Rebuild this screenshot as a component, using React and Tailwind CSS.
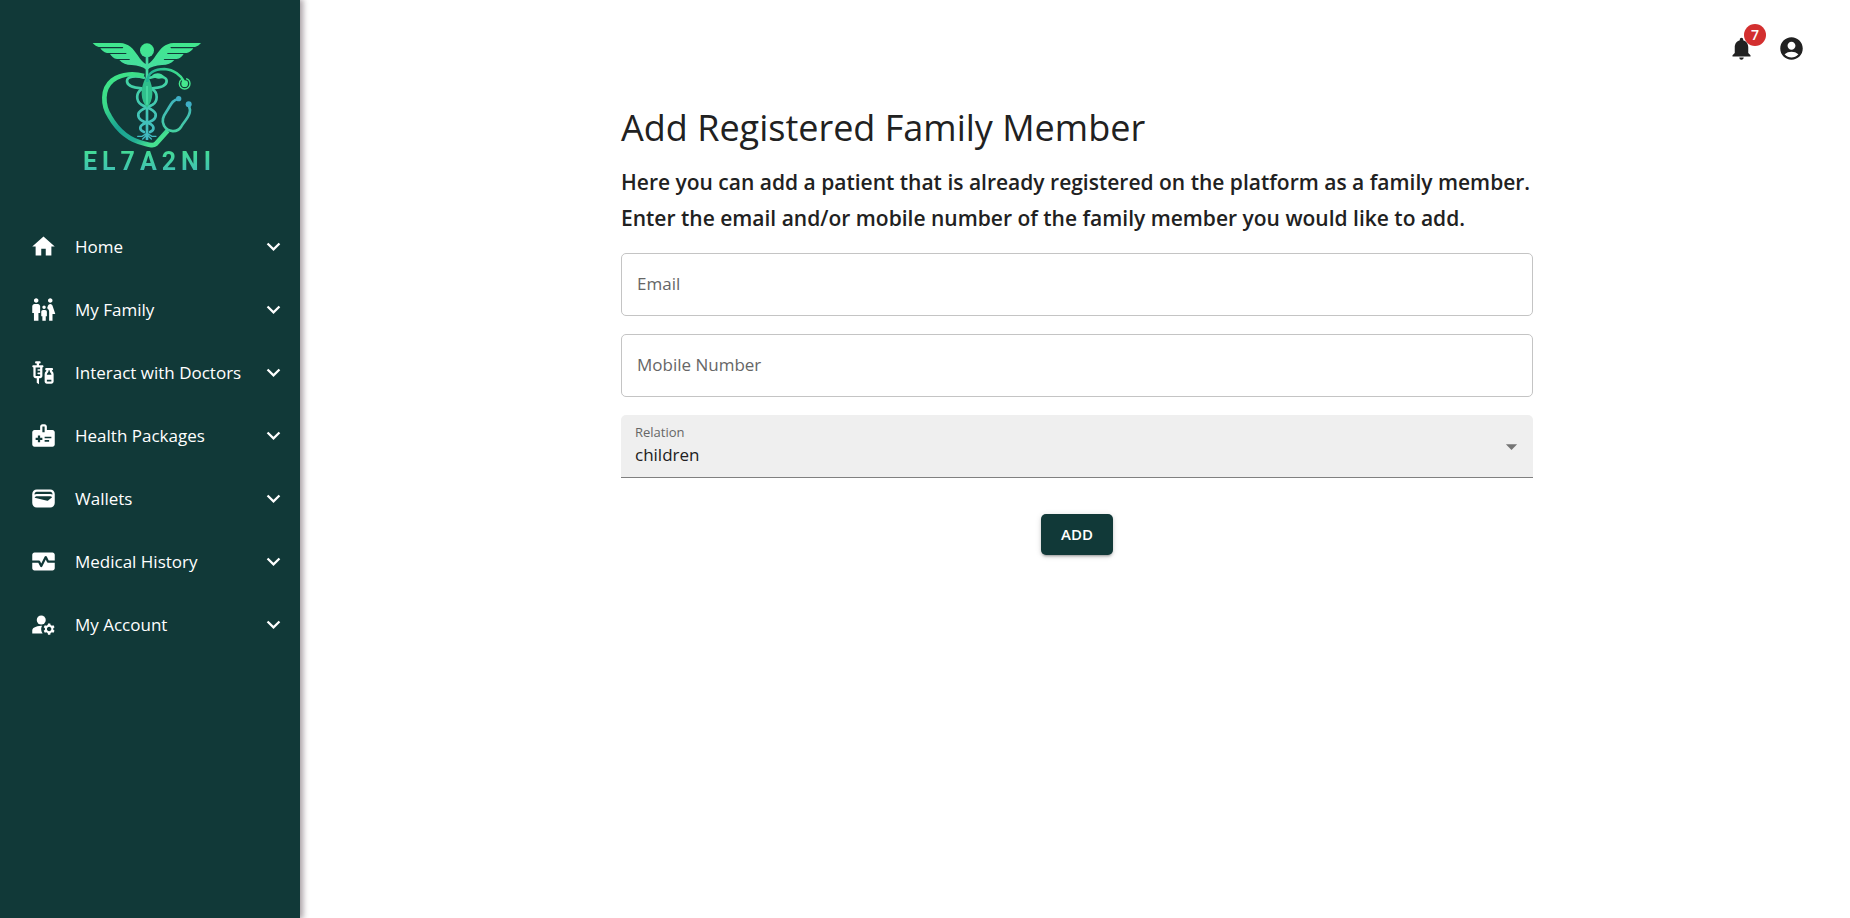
import {
  MdAccountCircle,
  MdArrowDropDown,
  MdExpandMore,
  MdFamilyRestroom,
  MdHome,
  MdManageAccounts,
  MdMedicalInformation,
  MdMonitorHeart,
  MdNotifications,
  MdVaccines,
  MdWallet,
} from "react-icons/md";

const menu = [
  { label: "Home", Icon: MdHome },
  { label: "My Family", Icon: MdFamilyRestroom },
  { label: "Interact with Doctors", Icon: MdVaccines },
  { label: "Health Packages", Icon: MdMedicalInformation },
  { label: "Wallets", Icon: MdWallet },
  { label: "Medical History", Icon: MdMonitorHeart },
  { label: "My Account", Icon: MdManageAccounts },
];

function Logo() {
  return (
    <div className="flex flex-col items-center">
      <svg viewBox="60 30 345 330" className="h-[110px] w-[115px]" fill="none" aria-hidden="true">
        <defs>
          <linearGradient id="wing" x1="0" y1="35" x2="0" y2="120" gradientUnits="userSpaceOnUse">
            <stop offset="0" stopColor="#40e88c" />
            <stop offset="1" stopColor="#46dca0" />
          </linearGradient>
          <linearGradient id="snake" x1="0" y1="130" x2="0" y2="330" gradientUnits="userSpaceOnUse">
            <stop offset="0" stopColor="#43d7a0" />
            <stop offset="1" stopColor="#42b9c4" />
          </linearGradient>
          <linearGradient id="heart" x1="110" y1="140" x2="245" y2="340" gradientUnits="userSpaceOnUse">
            <stop offset="0" stopColor="#3fe587" />
            <stop offset="0.3" stopColor="#3ad98a" />
            <stop offset="0.6" stopColor="#1aa593" />
            <stop offset="0.85" stopColor="#22ad94" />
            <stop offset="1" stopColor="#45e090" />
          </linearGradient>
          <linearGradient id="tube" x1="230" y1="0" x2="345" y2="0" gradientUnits="userSpaceOnUse">
            <stop offset="0" stopColor="#1faf93" />
            <stop offset="1" stopColor="#43e58e" />
          </linearGradient>
          <linearGradient id="fork" x1="0" y1="200" x2="0" y2="345" gradientUnits="userSpaceOnUse">
            <stop offset="0" stopColor="#3fb3bf" />
            <stop offset="0.6" stopColor="#44c8a8" />
            <stop offset="1" stopColor="#45e48e" />
          </linearGradient>
        </defs>
        <g fill="url(#wing)">
          <circle cx="231" cy="61" r="21" />
          <path d="M68 39H150C176 40 190 56 203 76C212 90 220 99 229 103V119C219 111 204 106 185 105C169 105 157 100 148 90H178L180 87H141C131 86 125 80 120 72H168L170 69H111C101 67 95 61 91 55H158L160 51H86C78 49 73 45 68 39Z" />
          <path d="M393 39H311C285 40 271 56 258 76C249 90 241 99 232 103V119C242 111 257 106 276 105C292 105 304 100 313 90H283L281 87H320C330 86 336 80 341 72H293L291 69H350C360 67 366 61 370 55H303L301 51H375C383 49 388 45 393 39Z" />
          <path d="M227 78H235V330H227Z" fill="url(#snake)" />
        </g>
        <g stroke="url(#snake)" strokeWidth="8" strokeLinecap="round">
          <path d="M222 143C196 136 171 139 171 153C171 169 198 174 215 175" />
          <path d="M240 143C264 136 290 139 290 153C290 169 264 174 246 175" />
          <path d="M214 178C198 188 197 213 214 224C228 233 253 236 257 252C260 270 240 276 226 280C207 287 206 300 222 306" />
          <path d="M248 178C264 188 264 213 248 224C234 233 208 236 205 252C202 270 221 276 236 280C255 287 254 300 240 306" />
          <path d="M203 319H216L231 310L246 319H258M218 327L231 314L244 327" strokeWidth="4" />
        </g>
        <path d="M246 136C258 126 276 128 284 142C270 149 255 148 246 136Z" fill="#44dca0" />
        <path d="M222 138C196 131 157 129 127 151C95 177 98 226 119 259C143 301 181 332 225 341C239 345 250 348 257 342L293 302" stroke="url(#heart)" strokeWidth="14" />
        <path d="M226 144C210 178 211 210 231 233C251 210 252 178 237 144Z" fill="#2fbf8c" />
        <path d="M231 168V224" stroke="#43d7a0" strokeWidth="6" />
        <path d="M232 156C232 127 256 117 283 117C313 119 333 137 341 153" stroke="url(#tube)" strokeWidth="8" />
        <circle cx="344" cy="161" r="16" stroke="#45e88e" strokeWidth="4" strokeDasharray="86 14" strokeDashoffset="-78" />
        <circle cx="344" cy="161" r="10" fill="#45e88e" />
        <g stroke="url(#fork)" strokeWidth="8">
          <path d="M326 207C306 209 302 226 290 244C279 260 274 272 282 287C294 308 322 308 333 291C344 270 360 262 360 240L356 224" />
        </g>
        <circle cx="326" cy="206" r="8" fill="#3fafc6" />
        <circle cx="356" cy="223" r="9" fill="#3fafc6" />
      </svg>
      <span className="bg-linear-to-b from-[#44dd95] to-[#40bdb5] bg-clip-text pl-[5px] font-[Roboto,sans-serif] text-[25px] leading-6 font-bold tracking-[5px] text-transparent">
        EL7A2NI
      </span>
    </div>
  );
}

function TextField({ id, label, type }) {
  return (
    <div className="relative">
      <input
        id={id}
        type={type}
        placeholder=" "
        className="peer block h-[63px] w-full rounded-[5px] border border-[#c4c4c4] px-4"
      />
      <label
        htmlFor={id}
        className="pointer-events-none absolute top-[19px] left-4 leading-6 text-[#666] peer-focus:hidden peer-not-placeholder-shown:hidden"
      >
        {label}
      </label>
    </div>
  );
}

export default function App() {
  return (
    <div className="flex min-h-screen bg-white font-['Open_Sans','Noto_Sans',sans-serif] text-[17px] text-[#212121]">
      <aside className="w-[300px] shrink-0 bg-[#113938] pt-10 text-white shadow-[2px_0_6px_1px_rgba(60,40,50,0.45)]">
        <div className="pr-[6px]">
          <Logo />
        </div>
        <nav className="mt-[41px]">
          <ul>
            {menu.map(({ label, Icon }) => (
              <li key={label}>
                <button type="button" className="flex h-[63px] w-full items-center pr-[13px] pl-[30px] text-left">
                  <Icon className="size-[27px]" aria-hidden="true" />
                  <span className="ml-[18px] grow">{label}</span>
                  <MdExpandMore className="size-[27px]" aria-hidden="true" />
                </button>
              </li>
            ))}
          </ul>
        </nav>
      </aside>

      <div className="flex min-w-0 grow flex-col pl-1">
        <header className="flex justify-end gap-[23px] pt-[35px] pr-[45px]">
          <button type="button" aria-label="Notifications" className="relative">
            <MdNotifications className="size-[27px]" />
            <span className="absolute -top-[11px] left-4 flex size-[22px] items-center justify-center rounded-full bg-[#d32f2f] text-[14px] leading-none font-semibold text-white">
              7
            </span>
          </button>
          <button type="button" aria-label="Account">
            <MdAccountCircle className="size-[27px]" />
          </button>
        </header>

        <main className="mx-auto mt-[41px] w-full max-w-[912px]">
          <h1 className="text-[36px] leading-[50px]">Add Registered Family Member</h1>
          <p className="mt-[11px] text-[21px] leading-9 font-semibold">
            Here you can add a patient that is already registered on the platform as a family member.
            <br />
            Enter the email and/or mobile number of the family member you would like to add.
          </p>
          <form className="mt-[17px] flex flex-col gap-[18px]">
            <TextField id="email" label="Email" type="email" />
            <TextField id="mobile" label="Mobile Number" type="tel" />
            <div className="relative">
              <label htmlFor="relation" className="absolute top-2 left-[14px] text-[13px] leading-[18px] text-[#666]">
                Relation
              </label>
              <select
                id="relation"
                defaultValue="children"
                className="block h-[63px] w-full appearance-none rounded-t-[5px] border-b border-[#808080] bg-[#efefef] pt-[18px] pr-10 pl-[14px]"
              >
                <option value="children">children</option>
                <option value="spouse">spouse</option>
              </select>
              <MdArrowDropDown className="pointer-events-none absolute top-[18px] right-2 size-[27px] text-[#757575]" />
            </div>
            <button
              type="submit"
              className="mt-[18px] h-[41px] w-[72px] self-center rounded-[5px] bg-[#113938] text-[15px] font-semibold text-white shadow-[0_3px_2px_-2px_rgba(0,0,0,0.2),0_2px_3px_rgba(0,0,0,0.14),0_1px_6px_rgba(0,0,0,0.12)]"
            >
              ADD
            </button>
          </form>
        </main>
      </div>
    </div>
  );
}
